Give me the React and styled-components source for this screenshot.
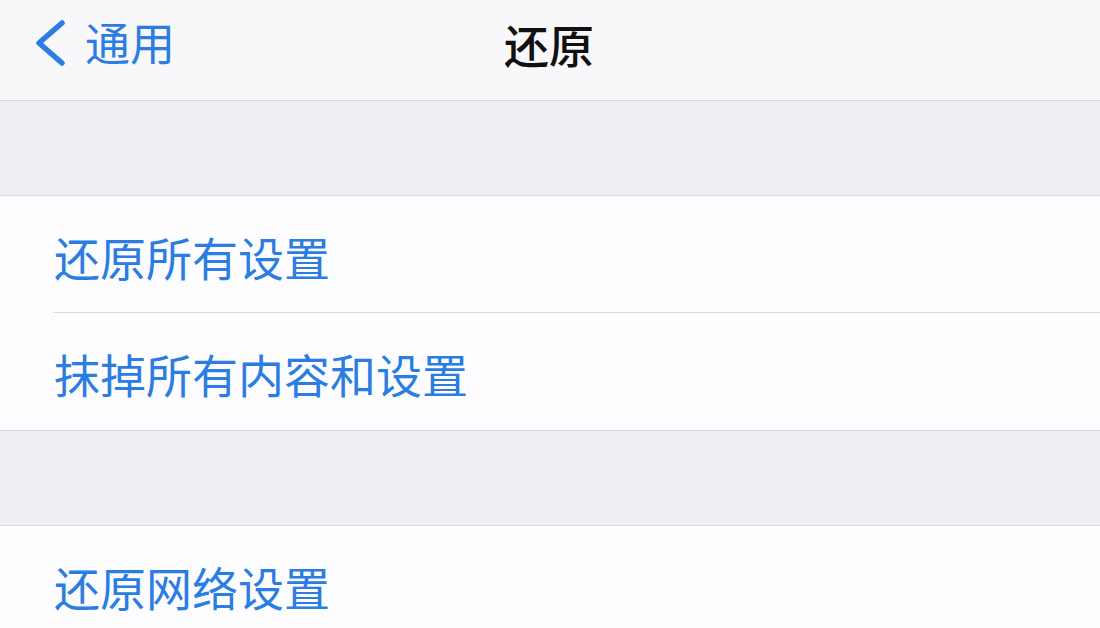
import React from 'react'
import styled, { createGlobalStyle } from 'styled-components'

const GlobalStyle = createGlobalStyle`
  html, body {
    margin: 0;
    padding: 0;
    background: #efeff3;
    font-family: "Noto Sans CJK SC", "Noto Sans", sans-serif;
  }
`

const sections = [
  ['还原所有设置', '抹掉所有内容和设置'],
  ['还原网络设置'],
]

function App() {
  return (
    <Page>
      <GlobalStyle />
      <NavBar>
        <BackButton>
          <svg width="34" height="50" viewBox="0 0 34 50">
            <path d="M28 4 L5 24 L28 44" fill="none" stroke="#2b7de3" strokeWidth="5.5" strokeLinecap="round" strokeLinejoin="round" />
          </svg>
          <BackLabel>通用</BackLabel>
        </BackButton>
        <Title>还原</Title>
      </NavBar>
      {sections.map((rows, i) => (
        <React.Fragment key={i}>
          <Spacer />
          <Group>
            {rows.map((label, j) => (
              <Row key={label} divided={j > 0}>
                <RowLabel>{label}</RowLabel>
              </Row>
            ))}
          </Group>
        </React.Fragment>
      ))}
    </Page>
  )
}

export default App

const Page = styled.div`
  width: 1100px;
  height: 628px;
  overflow: hidden;
  background: #efeff3;
`

const NavBar = styled.div`
  position: relative;
  height: 100px;
  background: #f8f8fa;
  border-bottom: 1px solid #d6d6da;
  display: flex;
  align-items: center;
  justify-content: center;
`

const BackButton = styled.div`
  position: absolute;
  left: 34px;
  top: 19px;
  display: flex;
  align-items: center;
  gap: 17px;
`

const BackLabel = styled.span`
  font-size: 45px;
  color: #2b7de3;
  line-height: 50px;
  margin-top: -4px;
`

const Title = styled.h1`
  margin: -12px 0 0 -2px;
  font-size: 45px;
  font-weight: 500;
  color: #111;
  line-height: 1;
`

const Spacer = styled.div`
  height: 94px;
  background: #efeff3;
`

const Group = styled.div`
  background: #fdfdff;
  border-top: 1px solid #dcdce0;
  border-bottom: 1px solid #d6d6da;
`

const Row = styled.div`
  height: 117px;
  display: flex;
  align-items: center;
  padding-left: 54px;
  position: relative;
  ${p => p.divided && `
    &::before {
      content: '';
      position: absolute;
      top: -1px;
      left: 53px;
      right: 0;
      height: 1px;
      background: #dcdce0;
    }
  `}
`

const RowLabel = styled.span`
  font-size: 46px;
  color: #2b7de3;
  line-height: 1;
  margin-top: 2px;
`
